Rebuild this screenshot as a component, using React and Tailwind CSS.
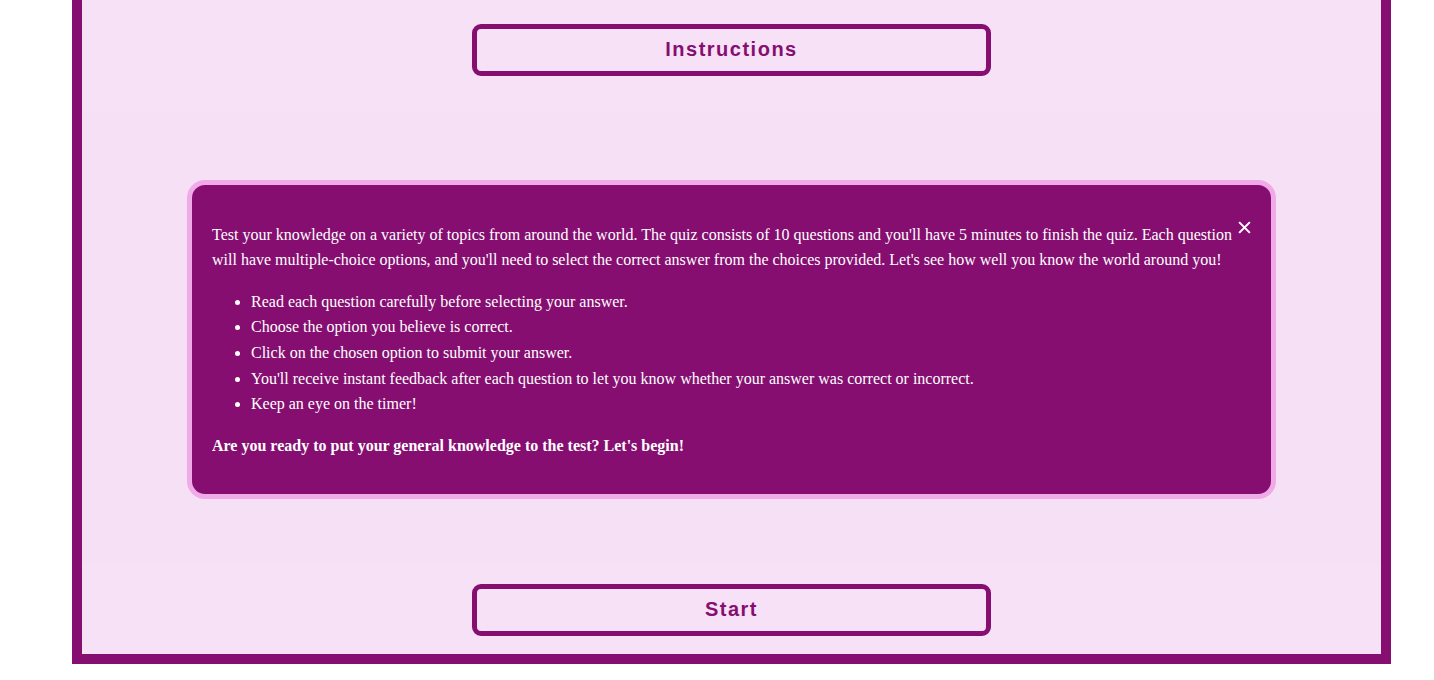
import React from 'react';

const rules = [
  'Read each question carefully before selecting your answer.',
  'Choose the option you believe is correct.',
  'Click on the chosen option to submit your answer.',
  "You'll receive instant feedback after each question to let you know whether your answer was correct or incorrect.",
  'Keep an eye on the timer!',
];

const QuizButton = ({ children }) => (
  <button className="w-[519px] h-[52px] pb-[2px] border-[5px] border-[#850e70] rounded-[9px] bg-transparent text-[#850e70] text-[20px] font-bold tracking-[1.5px] font-['Liberation_Sans',Arial,sans-serif]">
    {children}
  </button>
);

export default function App() {
  return (
    <div className="w-[1434px] h-[680px] bg-white overflow-hidden">
      <div className="ml-[72px] w-[1319px] h-[664px] border-x-[10px] border-b-[10px] border-[#850e70] bg-[#f7e1f6] flex flex-col">
        {/* Top */}
        <div className="h-[112px] flex justify-center pt-[24px]">
          <QuizButton>Instructions</QuizButton>
        </div>

        {/* Instructions card */}
        <div className="h-[453px] bg-[#f6e0f5] flex items-center justify-center">
          <div className="relative mt-[2px] w-[1089px] border-[5px] border-[#f0aae8] rounded-[18px] bg-[#850e70] px-[20px] pt-[21px] pb-[20px] text-white text-[16px] leading-[1.6] font-['Liberation_Serif','Times_New_Roman',serif]">
            <button className="absolute top-[36px] right-[20px] text-white">
              <svg width="13" height="13" viewBox="0 0 14 14" fill="none" stroke="white" strokeWidth="2.2" strokeLinecap="square">
                <path d="M2 2L12 12M12 2L2 12" />
              </svg>
            </button>
            <p className="my-[16px] pr-[4px]">
              Test your knowledge on a variety of topics from around the world. The quiz consists of 10 questions and you'll have 5 minutes to finish the quiz. Each question will have multiple-choice options, and you'll need to select the correct answer from the choices provided. Let's see how well you know the world around you!
            </p>
            <ul className="list-disc pl-[39px] my-[16px]">
              {rules.map((r) => (
                <li key={r}>{r}</li>
              ))}
            </ul>
            <p className="my-[16px] font-bold">
              Are you ready to put your general knowledge to the test? Let's begin!
            </p>
          </div>
        </div>

        {/* Bottom */}
        <div className="flex-1 flex justify-center pt-[19px]">
          <QuizButton>Start</QuizButton>
        </div>
      </div>
    </div>
  );
}
